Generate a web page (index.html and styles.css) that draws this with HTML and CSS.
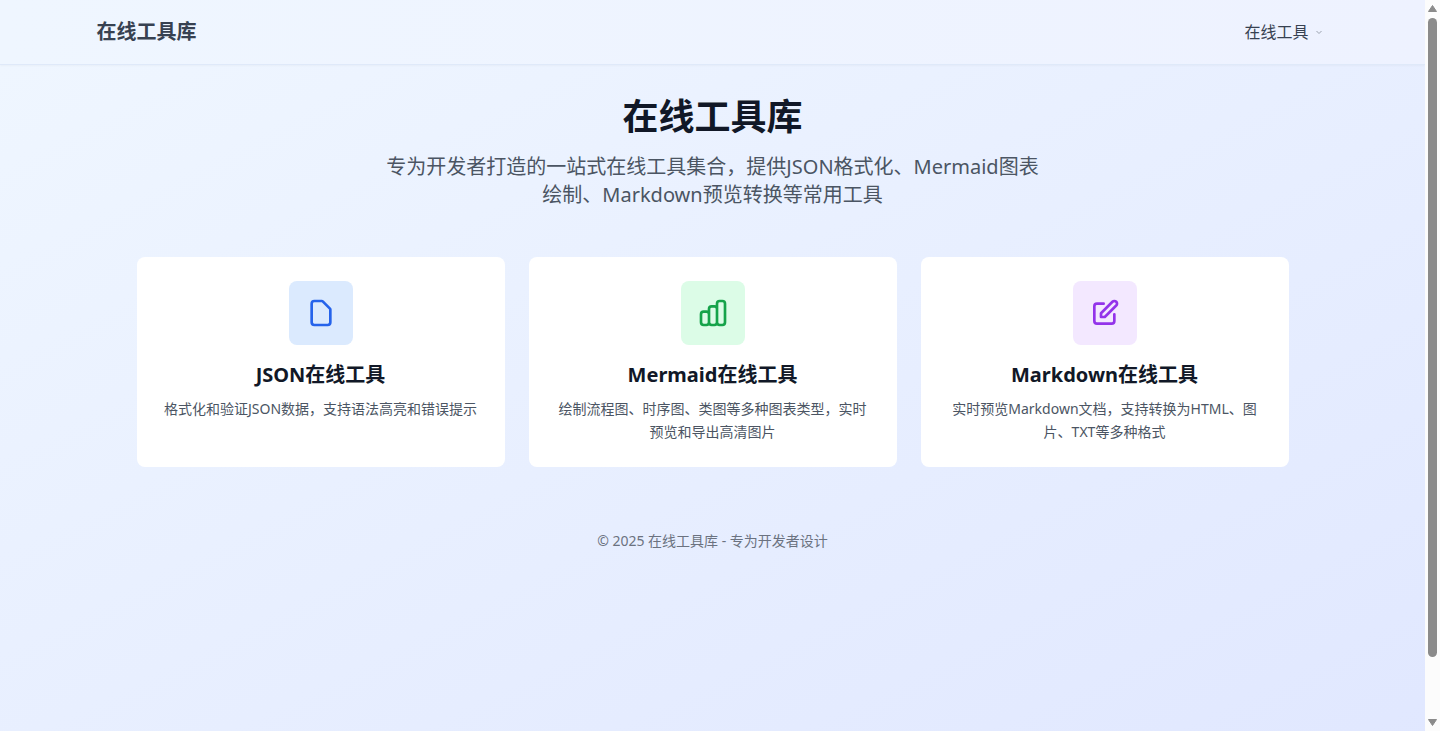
FILE: index.html
```
<!DOCTYPE html>
<html lang="zh-CN">
<head>
<meta charset="utf-8">
<meta name="viewport" content="width=device-width, initial-scale=1">
<title>在线工具库</title>
<link rel="stylesheet" href="styles.css">
</head>
<body>
<div class="page">
  <header class="topbar">
    <nav class="topbar-inner">
      <a class="brand" href="#">在线工具库</a>
      <button class="menu-button" type="button" aria-haspopup="true">
        在线工具
        <svg class="chevron" viewBox="0 0 8 8" aria-hidden="true"><path d="M1.500 3L4 5.500 6.500 3"/></svg>
      </button>
    </nav>
  </header>
  <div class="canvas">
    <main class="content">
      <section class="hero">
        <h1>在线工具库</h1>
        <p>专为开发者打造的一站式在线工具集合，提供JSON格式化、Mermaid图表绘制、Markdown预览转换等常用工具</p>
      </section>
      <section class="cards">
        <a class="card" href="#json">
          <span class="tile tile-blue">
            <svg class="icon" viewBox="0 0 24 24" aria-hidden="true"><path d="M7 21h10a2 2 0 002-2V9.414a1 1 0 00-.293-.707l-5.414-5.414A1 1 0 0012.586 3H7a2 2 0 00-2 2v14a2 2 0 002 2z"/></svg>
          </span>
          <h2>JSON在线工具</h2>
          <p>格式化和验证JSON数据，支持语法高亮和错误提示</p>
        </a>
        <a class="card" href="#mermaid">
          <span class="tile tile-green">
            <svg class="icon" viewBox="0 0 24 24" aria-hidden="true"><path d="M9 19v-6a2 2 0 00-2-2H5a2 2 0 00-2 2v6a2 2 0 002 2h2a2 2 0 002-2zm0 0V9a2 2 0 012-2h2a2 2 0 012 2v10m-6 0a2 2 0 002 2h2a2 2 0 002-2m0 0V5a2 2 0 012-2h2a2 2 0 012 2v14a2 2 0 01-2 2h-2a2 2 0 01-2-2z"/></svg>
          </span>
          <h2>Mermaid在线工具</h2>
          <p>绘制流程图、时序图、类图等多种图表类型，实时预览和导出高清图片</p>
        </a>
        <a class="card" href="#markdown">
          <span class="tile tile-purple">
            <svg class="icon" viewBox="0 0 24 24" aria-hidden="true"><path d="M11 5H6a2 2 0 00-2 2v11a2 2 0 002 2h11a2 2 0 002-2v-5m-1.414-9.414a2 2 0 112.828 2.828L11.828 15H9v-2.828l8.586-8.586z"/></svg>
          </span>
          <h2>Markdown在线工具</h2>
          <p>实时预览Markdown文档，支持转换为HTML、图片、TXT等多种格式</p>
        </a>
      </section>
      <footer class="footer">© 2025 在线工具库 - 专为开发者设计</footer>
    </main>
  </div>
</div>
<div class="scrollbar" aria-hidden="true">
  <svg class="arrow" viewBox="0 0 9 7"><path d="M4.500 .5L8.500 6.500H.5z"/></svg>
  <div class="track"><div class="thumb"></div></div>
  <svg class="arrow" viewBox="0 0 9 7"><path d="M4.500 6.500L.5 .5h8z"/></svg>
</div>
</body>
</html>
```
FILE: styles.css
```
* {
  box-sizing: border-box;
  margin: 0;
}

body {
  display: flex;
  height: 100vh;
  overflow: hidden;
  font-family: "Noto Sans", "Noto Sans CJK SC", sans-serif;
  color: #111827;
}

.page {
  flex: 1;
  min-width: 0;
  overflow-y: auto;
  scrollbar-width: none;
}

.topbar {
  position: relative;
  background: linear-gradient(to right, #eff6ff, #eef2ff);
  border-bottom: 1px solid #dfe9f9;
  box-shadow: 0 1px 2px rgba(0, 0, 0, 0.03);
}

.topbar-inner {
  display: flex;
  align-items: center;
  justify-content: space-between;
  max-width: 1280px;
  height: 64px;
  margin: 0 auto;
  padding: 0 24px;
}

.brand {
  font-size: 20px;
  line-height: 28px;
  font-weight: 700;
  color: #374151;
  text-decoration: none;
}

.menu-button {
  display: flex;
  align-items: center;
  gap: 6px;
  padding: 0 6px;
  border: 0;
  background: none;
  font: inherit;
  font-size: 16px;
  line-height: 24px;
  color: #374151;
}

.chevron {
  width: 8px;
  height: 8px;
  fill: none;
  stroke: #9ca3af;
}

.canvas {
  min-height: 100vh;
  background: linear-gradient(to bottom right, #eff6ff, #e0e7ff);
}

.content {
  max-width: 1184px;
  margin: 0 auto;
  padding: 32px 16px;
}

.hero {
  max-width: 672px;
  margin: 0 auto 48px;
  text-align: center;
}

.hero h1 {
  margin-bottom: 16px;
  font-size: 36px;
  line-height: 40px;
  font-weight: 700;
}

.hero p {
  font-size: 20px;
  line-height: 28px;
  color: #4b5563;
}

.cards {
  display: grid;
  grid-template-columns: repeat(3, 1fr);
  gap: 24px;
}

.card {
  display: flex;
  flex-direction: column;
  align-items: center;
  padding: 24px;
  border-radius: 8px;
  background: #fff;
  color: inherit;
  text-align: center;
  text-decoration: none;
}

.card h2 {
  margin: 16px 0 8px;
  font-size: 20px;
  line-height: 28px;
  font-weight: 700;
}

.card p {
  font-size: 14px;
  line-height: 23px;
  color: #4b5563;
}

.tile {
  display: grid;
  place-items: center;
  width: 64px;
  height: 64px;
  border-radius: 8px;
}

.tile-blue {
  background: #dbeafe;
  color: #2563eb;
}

.tile-green {
  background: #dcfce7;
  color: #16a34a;
}

.tile-purple {
  background: #f3e8ff;
  color: #9333ea;
}

.icon {
  width: 32px;
  height: 32px;
  fill: none;
  stroke: currentColor;
  stroke-width: 2;
  stroke-linecap: round;
  stroke-linejoin: round;
}

.footer {
  margin-top: 64px;
  font-size: 14px;
  line-height: 20px;
  text-align: center;
  color: #6b7280;
}

.scrollbar {
  display: flex;
  flex-direction: column;
  align-items: center;
  gap: 6px;
  width: 15px;
  padding: 5px 0;
  background: #fcfcfc;
}

.arrow {
  width: 9px;
  height: 7px;
  fill: #8b8b8b;
  stroke: #8b8b8b;
  stroke-linejoin: round;
}

.track {
  flex: 1;
  width: 9px;
}

.thumb {
  height: 92%;
  border-radius: 5px;
  background: #8b8b8b;
}
```
